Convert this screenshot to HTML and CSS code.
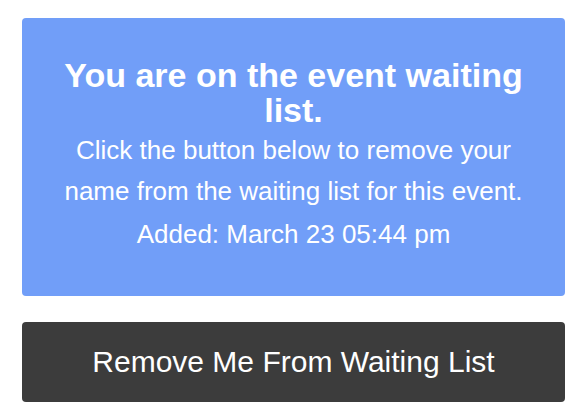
FILE: index.html
```html
<!DOCTYPE html>
<html lang="en">

<head>
    <meta charset="UTF-8">
    <meta name="viewport" content="width=device-width, initial-scale=1.0">
    <title>Waiting List</title>
    <link rel="stylesheet" href="styles.css">
</head>

<body>
    <div class="waitlist">
        <div class="waitlist-notice">
            <h2>You are on the event waiting list.</h2>
            <p>Click the button below to remove your name from the waiting list for this event.</p>
            <p class="added">Added: March 23 05:44 pm</p>
        </div>
        <button class="remove-btn">Remove Me From Waiting List</button>
    </div>
</body>

</html>
```

FILE: styles.css
```css
body {
    font-family: 'Liberation Sans', Arial, sans-serif;
    margin: 0;
    padding: 0;
    background-color: #fff;
}

.waitlist {
    padding: 18px 23px 16px 22px;
    display: flex;
    flex-direction: column;
    gap: 26px;
}

.waitlist-notice {
    background-color: #719ef8;
    color: #fff;
    border-radius: 4px;
    padding: 40px 30px 41px;
    text-align: center;
}

.waitlist-notice h2 {
    font-size: 34px;
    line-height: 35px;
    margin: 0 0 2px;
}

.waitlist-notice p {
    font-size: 26px;
    line-height: 41px;
    margin: 0;
}

.waitlist-notice .added {
    margin-top: 2px;
}

.remove-btn {
    background-color: #3c3c3c;
    color: #fff;
    font-family: inherit;
    font-size: 30px;
    height: 80px;
    border: none;
    border-radius: 4px;
    cursor: pointer;
}
```
